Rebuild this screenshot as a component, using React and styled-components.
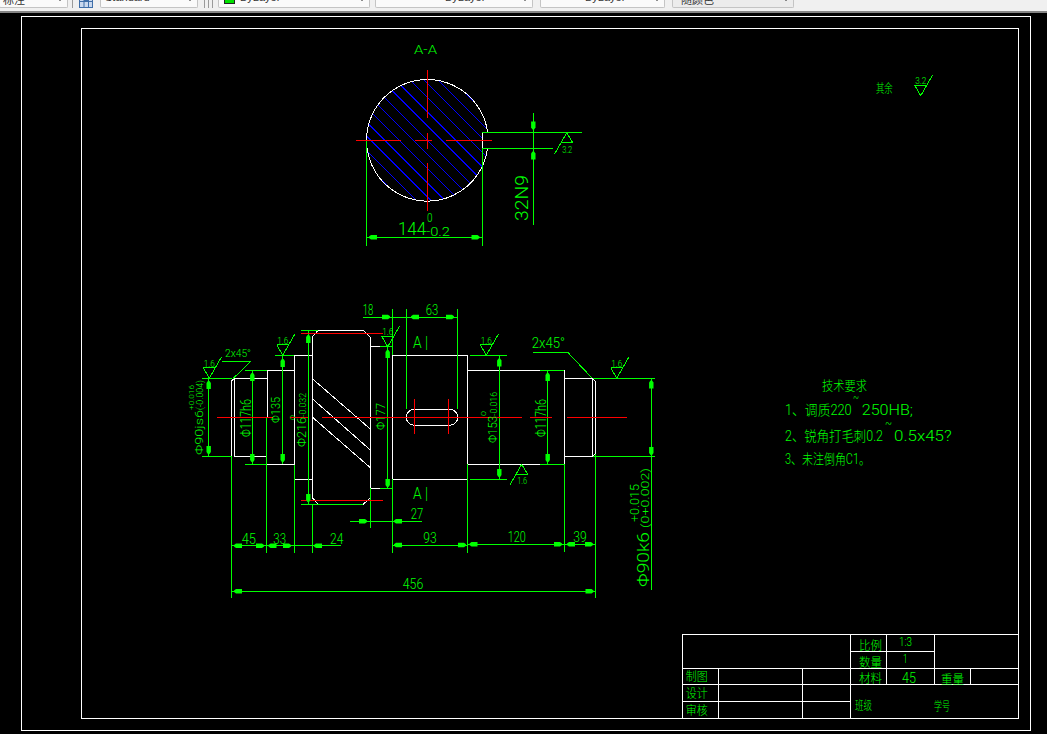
import React from "react";
import styled, { createGlobalStyle } from "styled-components";

const GlobalStyle = createGlobalStyle`
  html, body {
    margin: 0;
    padding: 0;
    height: 100%;
    overflow: hidden;
    background: #000;
  }
`;

const Page = styled.div`
  width: 1047px;
  height: 734px;
  display: flex;
  flex-direction: column;
  background: #000;
`;

const Toolbar = styled.div`
  flex: none;
  display: flex;
  align-items: flex-end;
  overflow: hidden;
  padding-bottom: 3px;
  height: 8px;
  background: #f0f0f0;
  border-bottom: 2px solid #858585;
  font-family: "Liberation Sans", "Noto Sans CJK SC", sans-serif;
  font-size: 11px;
  color: #333;
`;

const Combo = styled.div`
  flex: none;
  position: relative;
  box-sizing: border-box;
  width: ${(p) => p.$width}px;
  margin-left: ${(p) => p.$gap}px;
  height: 22px;
  padding: 5px 0 0 ${(p) => p.$pad}px;
  display: flex;
  gap: 5px;
  white-space: nowrap;
  background: ${(p) => (p.$muted ? "#ececec" : "#fafafa")};
  border: 1px solid #c4c4c4;
  border-top: 0;
  border-radius: 0 0 2px 2px;

  &::after {
    content: "";
    position: absolute;
    right: 5px;
    bottom: 6px;
    border-left: 2px solid transparent;
    border-right: 2px solid transparent;
    border-top: 2px solid #222;
  }
`;

const Swatch = styled.span`
  width: 9px;
  height: 11px;
  flex: none;
  background: #00e000;
  border: 1px solid #222;
`;

const Separator = styled.span`
  flex: none;
  width: 1px;
  height: 10px;
  margin-left: ${(p) => p.$gap}px;
  background: #9a9a9a;
`;

const Sheet = styled.svg`
  display: block;
  flex: none;
  width: 1047px;
  height: 721px;
`;

const Layer = styled.g`
  stroke: ${(p) => p.$color};
  stroke-width: 1;
  fill: none;
  shape-rendering: crispEdges;
`;

const Solid = styled.polygon`
  fill: #00ff00;
  stroke: none;
`;

const Label = styled.text`
  fill: #00ff00;
  stroke: none;
  font-family: Roboto, "Liberation Sans", "Noto Sans CJK SC", sans-serif;
  font-weight: 300;
  font-size: ${(p) => p.$size || 14}px;
`;

const GREEN = "#00ff00";
const WHITE = "#ffffff";
const RED = "#ff0000";
const BLUE = "#0000ff";

const whiteLines = [
  // sheet frames
  [21, 16, 1030.6, 16], [21, 16, 21, 730], [1030.6, 16, 1030.6, 730], [21, 730, 1030.6, 730],
  [81, 28.5, 1018.6, 28.5], [81, 28.5, 81, 718.3], [1018.6, 28.5, 1018.6, 718.3], [81, 718.3, 1018.6, 718.3],
  // title block
  [682.3, 634.3, 1018.6, 634.3], [682.3, 634.3, 682.3, 718.3],
  [682.3, 668.3, 1018.6, 668.3], [682.3, 684.7, 1018.6, 684.7], [682.3, 701.3, 850.3, 701.3],
  [850.3, 651.3, 934.3, 651.3], [850.3, 634.3, 850.3, 718.3], [886.3, 634.3, 886.3, 684.7],
  [934.3, 634.3, 934.3, 684.7], [718.3, 668.3, 718.3, 718.3], [802.3, 668.3, 802.3, 718.3],
  [970.3, 668.3, 970.3, 684.7],
  // keyway in section
  [482.3, 132.3, 482.3, 148.3],
  // shaft, left to right
  [231.7, 381, 231.7, 456.3], [231.7, 381, 234.3, 378.3], [234.3, 378.3, 234.3, 456.3],
  [234.3, 378.3, 267.3, 378.3], [234.3, 456.3, 266.3, 456.3],
  [267.3, 370.3, 267.3, 417.3], [267.3, 370.3, 294.3, 370.3], [267.3, 464.3, 294.3, 464.3],
  [294.3, 355.3, 294.3, 465], [294.3, 355.3, 312.3, 355.3], [295, 479.3, 312.3, 479.3],
  [312.3, 336.7, 312.3, 497.7], [318.3, 330.3, 363.3, 330.3],
  [312.3, 336.7, 318.3, 330.3], [363.3, 330.3, 370.3, 337.3],
  [312.3, 497.7, 318.3, 504.3], [370.3, 497.7, 363.3, 504.3],
  [370.3, 337.3, 370.3, 488.3], [370.3, 346.3, 380, 346.3], [370.3, 488.3, 380, 488.3],
  [313, 379.3, 370.3, 429], [313, 399.3, 370.3, 450], [313, 417.7, 370.3, 467.7],
  [392.3, 355.3, 392.3, 479.3], [392.3, 355.3, 467.3, 355.3], [392.3, 479.3, 467.3, 479.3],
  [467.3, 355.3, 467.3, 464.3], [467.3, 370.3, 540, 370.3], [467.3, 464.3, 540, 464.3],
  [564.3, 370.3, 564.3, 464.3], [564.3, 378.3, 592.3, 378.3], [564.3, 456.3, 592.3, 456.3],
  [592.3, 378.3, 592.3, 456.3], [592.3, 378.3, 595.3, 381], [592.3, 456.3, 595.3, 454],
  [595.3, 381, 595.3, 454],
];

const greenLines = [
  // section view
  [366.7, 140, 366.7, 246], [482.3, 148.3, 482.3, 246], [367, 237.3, 482, 237.3],
  [482.3, 132.3, 581.7, 132.3], [482.3, 148.3, 552.7, 148.3], [533.3, 113, 533.3, 225],
  // extension lines
  [231.7, 456.3, 231.7, 598], [266.3, 417.3, 266.3, 553], [294.3, 465, 294.3, 553],
  [312.3, 504.3, 312.3, 553], [370.3, 488.3, 370.3, 528.3], [392.3, 309, 392.3, 355.3],
  [392.3, 479.3, 392.3, 553], [406.3, 309, 406.3, 409], [457.3, 309, 457.3, 409],
  [467.3, 464.3, 467.3, 553], [564.3, 464.3, 564.3, 552], [595.3, 454, 595.3, 598],
  [201.7, 378.3, 232, 378.3], [201.7, 456.3, 232, 456.3], [245, 370.3, 267, 370.3],
  [245, 464.3, 267, 464.3], [275, 355.3, 294, 355.3], [301, 330.3, 318, 330.3],
  [301, 504.3, 363.3, 504.3], [380, 346.3, 392.3, 346.3], [380, 488.3, 392.3, 488.3],
  [470, 355.3, 506.7, 355.3], [470, 479.3, 506.7, 479.3], [540, 370.3, 564.3, 370.3],
  [540, 464.3, 564.3, 464.3], [593, 378.3, 655, 378.3], [593, 456.3, 655, 456.3],
  // dimension lines
  [208.7, 378.3, 208.7, 456.3], [252.3, 370.3, 252.3, 464.3], [282.7, 355.3, 282.7, 464.3],
  [308.3, 330.3, 308.3, 504.3], [387.7, 346.3, 387.7, 488.3], [499.3, 355.3, 499.3, 479.3],
  [547.7, 370.3, 547.7, 464.3], [651.3, 378.3, 651.3, 590],
  [363, 317, 457.3, 317], [350, 521.3, 421.7, 521.3], [231.7, 545.7, 341, 545.7],
  [392.3, 545, 467.3, 545], [467.3, 544.3, 595.3, 544.3], [231.7, 591.3, 595.3, 591.3],
  // chamfer leaders
  [221.7, 361.3, 251, 361.3], [251, 361.3, 233.3, 378.3],
  [533.3, 352.3, 567.7, 352.3], [567.7, 352.3, 592.3, 378.3],
];

const redLines = [
  [356, 140, 401, 140], [415, 140, 432, 140], [446, 140, 492, 140],
  [427.3, 70, 427.3, 117.7], [427.3, 132.7, 427.3, 148.7], [427.3, 163, 427.3, 211],
  [217, 417.3, 273, 417.3], [290, 417.3, 308, 417.3], [322, 417.3, 521.7, 417.3],
  [530, 417.3, 551.7, 417.3], [566.7, 417.3, 626.7, 417.3],
  [301, 333.3, 383, 333.3], [301, 500.3, 383, 500.3],
  [414.3, 399, 414.3, 434.3], [448.3, 399, 448.3, 434.3],
];

// section hatch, 45 degrees, clipped to the circle below
const hatchLines = Array.from({ length: 13 }, (_, i) => {
  const c = 202 + 14.2 * i;
  return [350, 350 - c, 510, 510 - c];
});

const arrows = [
  [533.3, 129.5, "d"], [533.3, 151.5, "u"], [369, 237.3, "l"], [479.5, 237.3, "r"],
  [390, 317, "r"], [411, 317, "l"], [454, 317, "r"],
  [208.7, 381, "u"], [208.7, 454, "d"], [252.3, 373, "u"], [252.3, 462, "d"],
  [282.7, 359, "u"], [282.7, 462, "d"], [308.3, 335, "u"], [308.3, 502, "d"],
  [387.7, 350, "u"], [387.7, 487, "d"], [367, 521.3, "r"], [394, 521.3, "l"],
  [234, 545.7, "l"], [264, 545.7, "r"], [268.5, 545.7, "l"], [291, 545.7, "r"], [314, 545.7, "l"],
  [234, 591.3, "l"], [593.5, 591.3, "r"], [394, 545, "l"], [466, 545, "r"],
  [469.5, 544.3, "l"], [562, 544.3, "r"], [567, 544.3, "l"], [593, 544.3, "r"],
  [499.3, 358.5, "u"], [499.3, 477, "d"], [547.7, 373, "u"], [547.7, 462, "d"],
  [651.3, 380.5, "u"], [651.3, 455, "d"],
];

const arrowPoints = ([x, y, d]) => {
  const len = 8;
  const sx = d === "l" ? 1 : d === "r" ? -1 : 0;
  const sy = d === "u" ? 1 : d === "d" ? -1 : 0;
  const tip = 0.8;
  const tail = 2.2;
  return [
    [x + sy * tip, y + sx * tip],
    [x + sx * 2 + sy * tail, y + sy * 2 + sx * tail],
    [x + sx * len + sy * tail, y + sy * len + sx * tail],
    [x + sx * len - sy * tail, y + sy * len - sx * tail],
    [x + sx * 2 - sy * tail, y + sy * 2 - sx * tail],
    [x - sy * tip, y - sx * tip],
  ]
    .map((p) => p.join(","))
    .join(" ");
};

// finish symbols: apex position, label
const finishDown = [
  [209.3, 378.3, "1.6"], [282.7, 355.3, "1.6"], [387.7, 346.7, "1.6"],
  [486.3, 355.3, "1.6"], [616.7, 378.3, "1.6"], [920.7, 95.7, "3.2"],
];

const finishUp = [
  [566.7, 132.7, "3.2"], [521.7, 464.3, "1.6"],
];

// x, baseline, width, text, font size
const labels = [
  [414, 54, 23, "A-A", 13],
  [398, 235, 28, "144", 18], [426, 236, 24, "-0.2", 12], [427, 222, 5.5, "0", 13],
  [362.7, 315, 10.5, "18", 14], [425.7, 315, 12.5, "63", 14], [410.7, 519, 12.5, "27", 14],
  [241.7, 544, 14.3, "45", 14], [273.3, 544, 12.7, "33", 14], [330, 544, 13.3, "24", 14],
  [423.3, 543, 13.4, "93", 14], [507.7, 542, 18, "120", 14], [573.3, 542, 13.4, "39", 14],
  [402.7, 589, 20.6, "456", 14],
  [413, 348, 15, "A |", 17], [413, 499, 15, "A |", 17],
  [225, 357, 26, "2x45°", 11], [531.7, 348, 33.3, "2x45°", 14],
  // title block
  [859, 650, 23, "比例", 12], [859, 667, 23, "数量", 12], [859, 683, 23, "材料", 12],
  [941, 684, 23, "重量", 12], [685.7, 681, 22, "制图", 12], [685.7, 698, 22, "设计", 12],
  [685.7, 715, 22, "审核", 12], [855, 710, 17, "班级", 12], [934, 711, 16, "学号", 12],
  [899, 646, 13, "1:3", 13], [903, 663, 4.5, "1", 13], [902, 683, 14, "45", 14],
  // notes
  [876, 93, 16.7, "其余", 12],
  [822, 390, 45, "技术要求", 13],
  [785, 415, 66.7, "1、调质220", 14], [853, 402, 6, "~", 12], [861.7, 415, 51.3, "250HB;", 14],
  [785, 441, 98, "2、锐角打毛刺0.2", 14], [885, 428, 7, "~", 12], [894, 441, 57.7, "0.5x45?", 14],
  [785, 464, 85, "3、未注倒角C1。", 14],
];

// text that runs up the page: baseline x, start y, length, text, font size
const upLabels = [
  [528, 221, 46, "32N9", 18],
  [203, 455, 45, "Φ90js6", 11], [203, 410, 30, "(-0.004)", 8.5], [194, 410, 25, "+0.016", 8],
  [251, 437, 38, "Φ117h6", 14], [280, 423, 26, "Φ135", 13],
  [306, 447, 30, "Φ216", 13], [306, 417, 24, "-0.032", 9], [295, 420, 5, "0", 8],
  [385, 430, 27, "Φ177", 13],
  [497, 443, 27, "Φ153", 13], [497, 416, 24, "-0.016", 9], [486, 416, 5, "0", 8],
  [546, 437, 38, "Φ117h6", 14],
  [649, 587, 55, "Φ90k6", 17], [649, 528, 60, "(0+0.002)", 11], [639, 522, 38, "+0.015", 13],
];

const Lines = ({ items, color }) => (
  <Layer $color={color}>
    {items.map(([x1, y1, x2, y2], i) => (
      <line key={i} x1={x1} y1={y1} x2={x2} y2={y2} />
    ))}
  </Layer>
);

const circlePath = "M487.6 132.3 A60.8 60.8 0 1 0 487.6 148.3";

const Drawing = () => (
  <Sheet viewBox="0 13 1047 721">
    <defs>
      <clipPath id="section">
        <path d={`${circlePath} L482.3 148.3 L482.3 132.3 Z`} />
      </clipPath>
    </defs>

    <g clipPath="url(#section)">
      <Lines items={hatchLines} color={BLUE} />
    </g>
    <Lines items={whiteLines} color={WHITE} />
    <Layer $color={WHITE}>
      <path d={circlePath} />
      <rect x="406.3" y="409.3" width="51.4" height="16" rx="8" />
    </Layer>
    <Lines items={greenLines} color={GREEN} />
    <Lines items={redLines} color={RED} />

    <Layer $color={GREEN}>
      {finishDown.map(([x, y], i) => (
        <path key={i} d={`M${x - 6} ${y - 10.5} H${x + 6} L${x} ${y} L${x - 6} ${y - 10.5} M${x} ${y} L${x + 12} ${y - 21}`} />
      ))}
      {finishUp.map(([x, y], i) => (
        <path key={i} d={`M${x - 6} ${y + 10} H${x + 6} L${x} ${y} L${x - 12} ${y + 21}`} />
      ))}
    </Layer>

    {arrows.map((a, i) => (
      <Solid key={i} points={arrowPoints(a)} />
    ))}

    {finishDown.map(([x, y, text], i) => (
      <Label key={i} x={x - 5.5} y={y - 11.5} $size={9} textLength={11} lengthAdjust="spacingAndGlyphs">
        {text}
      </Label>
    ))}
    {finishUp.map(([x, y, text], i) => (
      <Label key={i} x={x - 4.5} y={y + 20} $size={9} textLength={10} lengthAdjust="spacingAndGlyphs">
        {text}
      </Label>
    ))}

    {labels.map(([x, y, w, text, size], i) => (
      <Label key={i} x={x} y={y} $size={size} textLength={w} lengthAdjust="spacingAndGlyphs">
        {text}
      </Label>
    ))}
    {upLabels.map(([x, y, w, text, size], i) => (
      <Label
        key={i}
        x={x}
        y={y}
        $size={size}
        textLength={w}
        lengthAdjust="spacingAndGlyphs"
        transform={`rotate(-90 ${x} ${y})`}
      >
        {text}
      </Label>
    ))}
  </Sheet>
);

const GridIcon = () => (
  <svg width="14" height="8" viewBox="0 0 14 8" style={{ flex: "none", marginLeft: 6 }}>
    <rect x="0.5" y="-3" width="13" height="10.5" fill="#c9d8ee" stroke="#3f6ea8" />
    <path d="M0 1.5H14M5 -3V8M9.5 -3V8" stroke="#3f6ea8" />
    <rect x="5" y="-3" width="4.5" height="4.5" fill="#3f6ea8" />
  </svg>
);

export default function App() {
  return (
    <Page>
      <GlobalStyle />
      <Toolbar>
        <Combo $width={69} $gap={-1} $pad={3}>标注</Combo>
        <Separator $gap={4} />
        <GridIcon />
        <Combo $width={98} $gap={7} $pad={4}>Standard</Combo>
        <Separator $gap={6} />
        <Separator $gap={3} />
        <Separator $gap={3} />
        <Combo $width={152} $gap={5} $pad={5}>
          <Swatch />
          ByLayer
        </Combo>
        <Combo $width={158} $gap={5} $pad={69}>ByLayer</Combo>
        <Combo $width={125} $gap={7} $pad={44}>ByLayer</Combo>
        <Combo $width={122} $gap={7} $pad={8} $muted>随颜色</Combo>
      </Toolbar>
      <Drawing />
    </Page>
  );
}
